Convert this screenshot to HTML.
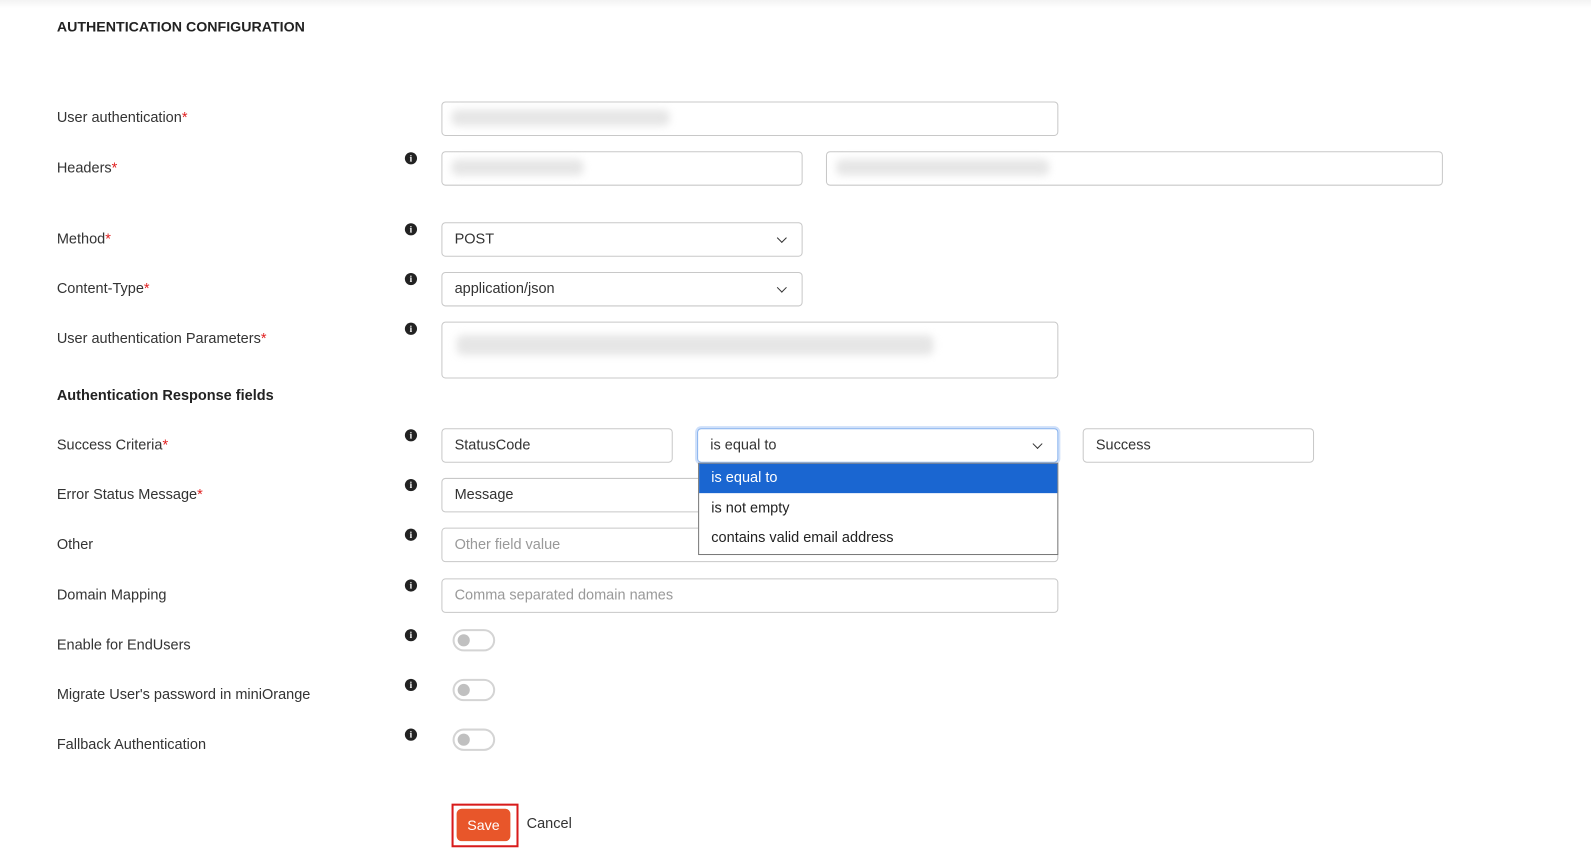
<!DOCTYPE html>
<html><head><style>
html,body{margin:0;width:1591px;height:851px;overflow:hidden;background:#fff}
#w{position:relative;width:1568px;height:839px;transform:scale(1.0147);transform-origin:0 0;font-family:"Liberation Sans",sans-serif;font-size:14px;color:#333}
.top{position:absolute;left:0;top:0;width:100%;height:8px;background:linear-gradient(#f3f3f3,#fff)}
.a{position:absolute}
.lbl{position:absolute;left:56px;font-size:14.3px;color:#333;line-height:18px}
.lbl b{color:#e02020;font-weight:normal}
.inp{position:absolute;border:1px solid #c8c8c8;border-radius:4px;box-sizing:border-box;background:#fff;padding-left:12px;line-height:32px;font-size:14.3px;color:#333}
.ph{color:#999}
.blur{position:absolute;height:16px;background:#e6e6e6;filter:blur(4px);border-radius:6px}
.info{position:absolute;left:399px;width:12px;height:12px;border-radius:50%;background:#222;color:#fff;font:bold 9px "Liberation Serif",serif;text-align:center;line-height:12px}
.chev{position:absolute;right:16px;top:11px;width:6px;height:6px;border-right:1.5px solid #333;border-bottom:1.5px solid #333;transform:rotate(45deg)}
.tog{position:absolute;left:446px;width:42px;height:22px;border:2px solid #d4d4d4;border-radius:12px;box-sizing:border-box}
.tog:after{content:"";position:absolute;left:3px;top:3px;width:12px;height:12px;border-radius:50%;background:#c0c0c0}
</style></head><body><div id="w">
<div class="top"></div>
<div class="a" style="left:56px;top:18px;font-weight:bold;font-size:14px;color:#222">AUTHENTICATION CONFIGURATION</div>

<div class="lbl" style="top:107px">User authentication<b>*</b></div>
<div class="inp" style="left:435px;top:100px;width:608px;height:34px"></div>
<div class="blur" style="left:445px;top:108px;width:215px"></div>

<div class="lbl" style="top:157px">Headers<b>*</b></div>
<div class="info" style="top:150px">i</div>
<div class="inp" style="left:435px;top:149px;width:356px;height:34px"></div>
<div class="blur" style="left:445px;top:157px;width:130px"></div>
<div class="inp" style="left:814px;top:149px;width:608px;height:34px"></div>
<div class="blur" style="left:824px;top:157px;width:210px"></div>

<div class="lbl" style="top:227px">Method<b>*</b></div>
<div class="info" style="top:220px">i</div>
<div class="inp" style="left:435px;top:219px;width:356px;height:34px">POST<div class="chev"></div></div>

<div class="lbl" style="top:276px">Content-Type<b>*</b></div>
<div class="info" style="top:269px">i</div>
<div class="inp" style="left:435px;top:268px;width:356px;height:34px">application/json<div class="chev"></div></div>

<div class="lbl" style="top:325px">User authentication Parameters<b>*</b></div>
<div class="info" style="top:318px">i</div>
<div class="inp" style="left:435px;top:317px;width:608px;height:56px"></div>
<div class="blur" style="left:450px;top:330px;width:470px;height:20px"></div>

<div class="lbl" style="top:381px;font-weight:bold;color:#222">Authentication Response fields</div>

<div class="lbl" style="top:430px">Success Criteria<b>*</b></div>
<div class="info" style="top:423px">i</div>
<div class="inp" style="left:435px;top:422px;width:228px;height:34px">StatusCode</div>
<div class="inp" style="left:687px;top:422px;width:356px;height:34px;border-color:#8ab4ee;box-shadow:0 0 0 2px #cfe0fa">is equal to<div class="chev"></div></div>
<div class="inp" style="left:1067px;top:422px;width:228px;height:34px">Success</div>

<div class="lbl" style="top:479px">Error Status Message<b>*</b></div>
<div class="info" style="top:472px">i</div>
<div class="inp" style="left:435px;top:471px;width:608px;height:34px">Message</div>

<div class="lbl" style="top:528px">Other</div>
<div class="info" style="top:521px">i</div>
<div class="inp ph" style="left:435px;top:520px;width:608px;height:34px">Other field value</div>

<div class="a" style="left:688px;top:456px;width:355px;height:91px;background:#fff;border:1px solid #777;box-sizing:border-box;font-size:14.3px;color:#222">
<div style="height:29px;line-height:29px;background:#1a66d1;color:#fff;padding-left:12px">is equal to</div>
<div style="height:30px;line-height:30px;padding-left:12px">is not empty</div>
<div style="height:30px;line-height:28px;padding-left:12px">contains valid email address</div>
</div>

<div class="lbl" style="top:578px">Domain Mapping</div>
<div class="info" style="top:571px">i</div>
<div class="inp ph" style="left:435px;top:570px;width:608px;height:34px">Comma separated domain names</div>

<div class="lbl" style="top:627px">Enable for EndUsers</div>
<div class="info" style="top:620px">i</div>
<div class="tog" style="top:620px"></div>

<div class="lbl" style="top:676px">Migrate User's password in miniOrange</div>
<div class="info" style="top:669px">i</div>
<div class="tog" style="top:669px"></div>

<div class="lbl" style="top:725px">Fallback Authentication</div>
<div class="info" style="top:718px">i</div>
<div class="tog" style="top:718px"></div>

<div class="a" style="left:445px;top:792px;width:66px;height:43px;border:2px solid #d81b1b;box-sizing:border-box"></div>
<div class="a" style="left:450px;top:797px;width:53px;height:32px;background:#e8562a;border-radius:5px;color:#fff;text-align:center;line-height:32px;font-size:14px">Save</div>
<div class="a" style="left:519px;top:804px;font-size:14.3px;color:#333">Cancel</div>
</div></body></html>
